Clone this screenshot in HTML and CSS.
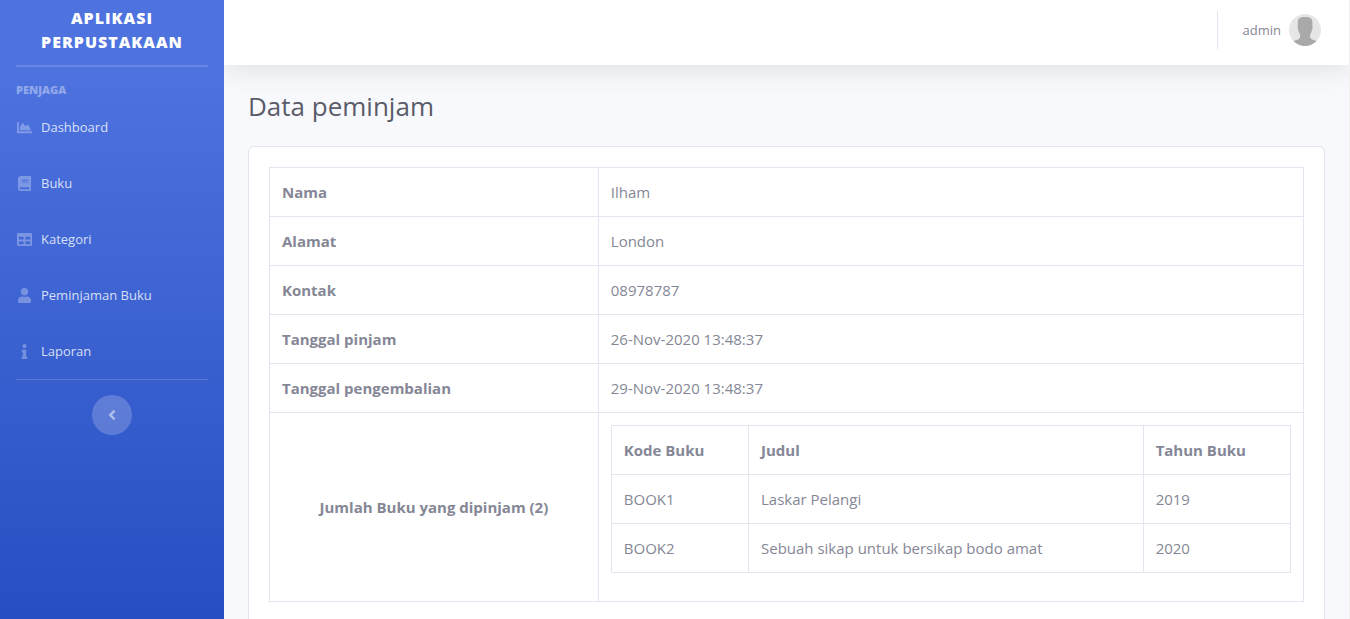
FILE: index.html
```html
<!DOCTYPE html>
<html lang="id">
<head>
<meta charset="utf-8">
<meta name="viewport" content="width=device-width, initial-scale=1">
<title>Aplikasi Perpustakaan</title>
<link rel="stylesheet" href="styles.css">
</head>
<body>
<div class="shell">
  <nav class="sidebar">
    <a class="brand" href="#">Aplikasi Perpustakaan</a>
    <hr class="divider divider-thick">
    <div class="nav-heading">Penjaga</div>
    <a class="nav-item" href="#"><svg class="icon" viewBox="0 0 512 512" aria-hidden="true"><path d="M500 384c6.600 0 12 5.400 12 12v40c0 6.600-5.400 12-12 12H12c-6.600 0-12-5.400-12-12V76c0-6.600 5.400-12 12-12h40c6.600 0 12 5.400 12 12v308h436zM372.700 159.500L288 216l-85.300-113.700c-5.100-6.800-15.500-6.300-19.900 1L96 248v104h384l-89.900-187.800c-3.200-6.500-11.400-8.700-17.400-4.700z"/></svg><span>Dashboard</span></a>
    <a class="nav-item" href="#"><svg class="icon" viewBox="0 0 448 512" aria-hidden="true"><path d="M448 360V24c0-13.300-10.700-24-24-24H96C43 0 0 43 0 96v320c0 53 43 96 96 96h328c13.300 0 24-10.700 24-24v-16c0-7.500-3.500-14.300-8.900-18.700-4.200-15.400-4.200-59.300 0-74.700 5.400-4.300 8.900-11.100 8.900-18.600zM128 134c0-3.300 2.700-6 6-6h212c3.300 0 6 2.700 6 6v20c0 3.300-2.700 6-6 6H134c-3.300 0-6-2.700-6-6v-20zm0 64c0-3.300 2.700-6 6-6h212c3.300 0 6 2.700 6 6v20c0 3.300-2.700 6-6 6H134c-3.300 0-6-2.700-6-6v-20zm253.400 250H96c-17.700 0-32-14.300-32-32 0-17.600 14.400-32 32-32h285.400c-1.900 17.100-1.900 46.900 0 64z"/></svg><span>Buku</span></a>
    <a class="nav-item" href="#"><svg class="icon" viewBox="0 0 512 512" aria-hidden="true"><path d="M464 32H48C21.490 32 0 53.490 0 80v352c0 26.510 21.490 48 48 48h416c26.510 0 48-21.490 48-48V80c0-26.510-21.490-48-48-48zM224 416H64v-96h160v96zm0-160H64v-96h160v96zm224 160H288v-96h160v96zm0-160H288v-96h160v96z"/></svg><span>Kategori</span></a>
    <a class="nav-item" href="#"><svg class="icon" viewBox="0 0 448 512" aria-hidden="true"><path d="M224 256c70.700 0 128-57.300 128-128S294.700 0 224 0 96 57.300 96 128s57.300 128 128 128zm89.600 32h-16.700c-22.200 10.200-46.900 16-72.900 16s-50.600-5.800-72.900-16h-16.700C60.200 288 0 348.200 0 422.400V464c0 26.500 21.500 48 48 48h352c26.500 0 48-21.500 48-48v-41.600c0-74.200-60.200-134.400-134.400-134.400z"/></svg><span>Peminjaman Buku</span></a>
    <a class="nav-item" href="#"><svg class="icon" viewBox="0 0 192 512" aria-hidden="true"><path d="M20 424.229h20V279.771H20c-11.046 0-20-8.954-20-20V212c0-11.046 8.954-20 20-20h112c11.046 0 20 8.954 20 20v212.229h20c11.046 0 20 8.954 20 20V492c0 11.046-8.954 20-20 20H20c-11.046 0-20-8.954-20-20v-47.771c0-11.046 8.954-20 20-20zM96 0C56.235 0 24 32.235 24 72s32.235 72 72 72 72-32.235 72-72S135.764 0 96 0z"/></svg><span>Laporan</span></a>
    <hr class="divider">
    <button class="toggle" type="button" aria-label="Ciutkan menu"><svg class="toggle-icon" viewBox="0 0 256 512" aria-hidden="true"><path d="M31.700 239l136-136c9.400-9.400 24.600-9.400 33.900 0l22.600 22.600c9.400 9.400 9.400 24.600 0 33.900L127.900 256l96.400 96.400c9.400 9.400 9.400 24.600 0 33.900L201.700 409c-9.400 9.400-24.600 9.400-33.900 0l-136-136c-9.500-9.400-9.500-24.600-.1-34z"/></svg></button>
  </nav>
  <div class="page">
    <header class="topbar">
      <a class="user" href="#">
        <span>admin</span>
        <svg class="avatar" viewBox="0 0 32 32" aria-hidden="true">
          <defs><clipPath id="round"><circle cx="16" cy="16" r="16"/></clipPath></defs>
          <g clip-path="url(#round)">
            <rect width="32" height="32" fill="#e6e6e6"/>
            <path fill="#a9a9a9" d="M9.500 5C11 3.300 13.500 3 16 3s5 .3 6.500 2c1 1.500 1.100 4 .8 7 .6.500.4 2.300-.2 3.600-.4 2-1 3.600-1.900 4.900-.3 2 .1 3.600 1.200 4.500 1.900 1.100 4 1.500 5.600 2.500V32H4v-4.500c1.600-1 4-1.400 5.900-2.500 1.100-.9 1.500-2.500 1.200-4.500-1-1.300-1.600-2.900-2-4.900-.6-1.300-.8-3.100-.2-3.600-.3-3-.3-5.500.6-7z"/>
          </g>
        </svg>
      </a>
    </header>
    <main class="content">
      <h1 class="title">Data peminjam</h1>
      <section class="card">
        <table class="table">
          <colgroup><col class="col-label"><col></colgroup>
          <tbody>
            <tr><th scope="row">Nama</th><td>Ilham</td></tr>
            <tr><th scope="row">Alamat</th><td>London</td></tr>
            <tr><th scope="row">Kontak</th><td>08978787</td></tr>
            <tr><th scope="row">Tanggal pinjam</th><td>26-Nov-2020 13:48:37</td></tr>
            <tr><th scope="row">Tanggal pengembalian</th><td>29-Nov-2020 13:48:37</td></tr>
            <tr>
              <th class="books-label" scope="row">Jumlah Buku yang dipinjam (2)</th>
              <td>
                <table class="table">
                  <colgroup><col class="col-code"><col><col class="col-year"></colgroup>
                  <thead><tr><th scope="col">Kode Buku</th><th scope="col">Judul</th><th scope="col">Tahun Buku</th></tr></thead>
                  <tbody>
                    <tr><td>BOOK1</td><td>Laskar Pelangi</td><td>2019</td></tr>
                    <tr><td>BOOK2</td><td>Sebuah sikap untuk bersikap bodo amat</td><td>2020</td></tr>
                  </tbody>
                </table>
              </td>
            </tr>
          </tbody>
        </table>
      </section>
    </main>
  </div>
</div>
</body>
</html>
```
FILE: styles.css
```css
*, *::before, *::after { box-sizing: border-box; }

body {
  margin: 0;
  background: #f8f9fc;
  color: #858796;
  font-family: "Segoe UI", "Open Sans", "Noto Sans", sans-serif;
  font-size: 15px;
  line-height: 24px;
}

a { color: inherit; text-decoration: none; }

.shell {
  display: flex;
  height: 100vh;
  overflow: hidden;
  border-right: 1px solid #f0f0f1;
}

.sidebar {
  display: flex;
  flex-direction: column;
  flex: 0 0 224px;
  background: linear-gradient(180deg, #4e73df 10%, #224abe 100%) 0 0 / 100% 112%;
}

.brand {
  padding: 6px 16px 11px;
  color: #fff;
  font-size: 16px;
  font-weight: 800;
  letter-spacing: 1px;
  text-align: center;
  text-transform: uppercase;
}

.divider {
  width: auto;
  height: 1px;
  margin: 0 16px;
  border: 0;
  background: rgba(255, 255, 255, .18);
}

.divider-thick {
  height: 2px;
  background: rgba(255, 255, 255, .15);
}

.nav-heading {
  padding: 15px 16px 1px;
  color: rgba(255, 255, 255, .4);
  font-size: 11px;
  font-weight: 800;
  line-height: 16px;
  text-transform: uppercase;
}

.nav-item {
  display: flex;
  align-items: center;
  gap: 9px;
  padding: 16px 17px;
  color: rgba(255, 255, 255, .8);
  font-size: 13px;
}

.icon {
  width: 15px;
  height: 15px;
  fill: rgba(255, 255, 255, .3);
}

.toggle {
  display: flex;
  align-items: center;
  justify-content: center;
  align-self: center;
  width: 40px;
  height: 40px;
  margin-top: 15px;
  padding: 0;
  border: 0;
  border-radius: 50%;
  background: rgba(255, 255, 255, .2);
}

.toggle-icon {
  width: 8px;
  height: 16px;
  fill: rgba(255, 255, 255, .5);
}

.page {
  display: flex;
  flex: 1;
  flex-direction: column;
  min-width: 0;
  overflow: hidden;
}

.topbar {
  position: relative;
  display: flex;
  align-items: flex-start;
  justify-content: flex-end;
  padding: 11px 28px 16px;
  background: #fff;
  box-shadow: 0 2px 28px rgba(58, 59, 69, .15);
}

.user {
  display: flex;
  align-items: center;
  gap: 8px;
  height: 38px;
  padding-left: 25px;
  border-left: 1px solid #e3e6f0;
  font-size: 13px;
}

.avatar { width: 32px; height: 32px; }

.content { padding: 25px 24px; }

.title {
  margin: 0 0 23px;
  color: #5a5c69;
  font-size: 26px;
  font-weight: 400;
  line-height: 33px;
}

.card {
  padding: 20px;
  border: 1px solid #e3e6f0;
  border-radius: 6px;
  background: #fff;
}

.table {
  width: 100%;
  margin-bottom: 16px;
  border-collapse: collapse;
  table-layout: fixed;
}

.table th,
.table td {
  padding: 12px;
  border: 1px solid #e3e6f0;
  text-align: left;
  vertical-align: top;
}

.table th { font-weight: 700; }

.table .books-label {
  text-align: center;
  vertical-align: middle;
}

.col-label { width: 31.8%; }
.col-code { width: 20.2%; }
.col-year { width: 21.7%; }
```
